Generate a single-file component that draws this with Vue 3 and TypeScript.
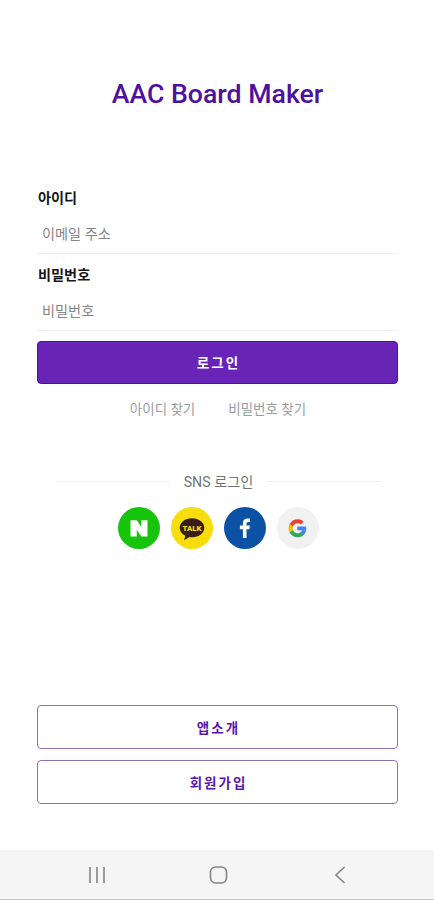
<script setup lang="ts">
import { ref } from 'vue'

const email = ref('')
const password = ref('')
</script>

<template>
  <div class="screen">
    <main class="content">
      <h1 class="title">AAC Board Maker</h1>

      <form class="form" @submit.prevent>
        <label class="label" for="email">아이디</label>
        <input id="email" v-model="email" class="input" type="text" placeholder="이메일 주소" />
        <label class="label second" for="password">비밀번호</label>
        <input id="password" v-model="password" class="input" type="password" placeholder="비밀번호" />
        <button class="btn primary" type="submit">로그인</button>
      </form>

      <nav class="links">
        <a class="link">아이디 찾기</a>
        <a class="link">비밀번호 찾기</a>
      </nav>

      <div class="divider"><span class="sns">SNS 로그인</span></div>

      <div class="socials">
        <button class="social" type="button" aria-label="Naver">
          <svg viewBox="0 0 42 42">
            <circle cx="21" cy="21" r="21" fill="#15c40b" />
            <path d="M12.500 13.300h6.300l4.500 6.800v-6.800h6.200v16.200h-6.200l-4.500-6.700v6.700h-6.300z" fill="#fff" />
          </svg>
        </button>
        <button class="social" type="button" aria-label="Kakao">
          <svg viewBox="0 0 42 42">
            <circle cx="21" cy="21" r="21" fill="#f8dd0c" />
            <path d="M21 11.200c-7 0-12.300 4.200-12.300 9.600 0 3.500 2.200 6.400 5.600 8l-1.200 4.500 5.300-3.200c.8.200 1.700.2 2.600.2 7 0 12.300-4.200 12.300-9.500S28 11.200 21 11.200z" fill="#381e1b" />
            <text class="talk" x="21" y="24" text-anchor="middle" textLength="19" lengthAdjust="spacingAndGlyphs">TALK</text>
          </svg>
        </button>
        <button class="social" type="button" aria-label="Facebook">
          <svg viewBox="0 0 42 42">
            <circle cx="21" cy="21" r="21" fill="#0b52a4" />
            <path d="M18.900 31v-8.800h-3V18.600h3v-2.400c0-3.200 1.800-4.700 4.700-4.700h2.400v3.400h-1.700c-1.400 0-1.800.7-1.800 1.900v1.800h3.400l-.5 3.600h-2.900V31z" fill="#fff" />
          </svg>
        </button>
        <button class="social" type="button" aria-label="Google">
          <svg viewBox="0 0 42 42">
            <circle cx="21" cy="21" r="21" fill="#f1f1f1" />
            <g transform="translate(11.800 12.500) scale(.365)">
              <path fill="#EA4335" stroke="#EA4335" stroke-width="1.500" d="M24 9.500c3.540 0 6.710 1.220 9.210 3.600l6.850-6.850C35.900 2.380 30.470 0 24 0 14.620 0 6.510 5.380 2.560 13.220l7.980 6.190C12.430 13.720 17.740 9.500 24 9.500z" />
              <path fill="#34A853" stroke="#34A853" stroke-width="1.500" d="M24 48c6.480 0 11.930-2.130 15.890-5.810l-7.730-6c-2.150 1.450-4.920 2.300-8.160 2.300-6.260 0-11.570-4.220-13.470-9.910l-7.980 6.190C6.510 42.620 14.620 48 24 48z" />
              <path fill="#FBBC05" stroke="#FBBC05" stroke-width="1.500" d="M10.530 28.590c-.48-1.450-.76-2.990-.76-4.590s.27-3.140.76-4.590l-7.980-6.190C.92 16.460 0 20.120 0 24c0 3.880.92 7.540 2.560 10.780l7.970-6.190z" />
              <path fill="#4285F4" stroke="#4285F4" stroke-width="1.500" d="M46.980 24.550c0-1.570-.15-3.090-.38-4.550H24v9.020h12.940c-.58 2.960-2.260 5.480-4.780 7.180l7.730 6c4.510-4.180 7.090-10.360 7.090-17.650z" />
            </g>
          </svg>
        </button>
      </div>

      <div class="actions">
        <button class="btn outline" type="button">앱소개</button>
        <button class="btn outline" type="button">회원가입</button>
      </div>
    </main>

    <footer class="system-bar">
      <svg class="sys" viewBox="0 0 20 20"><path d="M3 2v16M10 2v16M17 2v16" /></svg>
      <svg class="sys" viewBox="0 0 20 20"><rect x="1.500" y="2" width="16" height="16" rx="5" /></svg>
      <svg class="sys" viewBox="0 0 20 20"><path d="M14.500 2L6 10l8.500 8" /></svg>
    </footer>
  </div>
</template>

<style>
body {
  background: #fff;
}
</style>

<style scoped>
.screen {
  box-sizing: border-box;
  display: flex;
  flex-direction: column;
  width: 100%;
  height: 900px;
  background: #fff;
  font-family: Roboto, "Noto Sans CJK KR", sans-serif;
}
.content {
  display: flex;
  flex: 1;
  flex-direction: column;
  padding: 78px 36px 46px 37px;
}
.title {
  margin: 0;
  color: #50109f;
  font-size: 26.700px;
  font-weight: 500;
  line-height: 32px;
  text-align: center;
}
.form {
  display: flex;
  flex-direction: column;
  margin-top: 78px;
}
.label {
  height: 20px;
  padding-left: 1px;
  color: #151515;
  font-size: 14.200px;
  font-weight: 700;
  line-height: 20px;
}
.second {
  margin-top: 11px;
}
.input {
  box-sizing: border-box;
  width: 100%;
  height: 46px;
  margin: 0;
  padding: 7px 5px 0;
  border: 0;
  border-bottom: 1px solid #f0f0f0;
  outline: 0;
  background: transparent;
  font: 14.200px/20px Roboto, "Noto Sans CJK KR", sans-serif;
}
.input::placeholder {
  color: #858585;
  opacity: 1;
}
.btn {
  box-sizing: border-box;
  width: 100%;
  padding: 0 0 1px 2px;
  border-radius: 4px;
  font-family: Roboto, "Noto Sans CJK KR", sans-serif;
  font-size: 13.500px;
  font-weight: 700;
  letter-spacing: 2px;
}
.primary {
  height: 43px;
  margin-top: 10px;
  border: 1px solid #4c0f9f;
  background: #6724b7;
  color: #fff;
}
.links {
  display: flex;
  justify-content: center;
  gap: 33px;
  margin: 15px 0 0 1px;
}
.link {
  color: #999da1;
  font-size: 13.500px;
  line-height: 20px;
}
.divider {
  display: flex;
  align-items: center;
  gap: 14px;
  height: 20px;
  margin: 52px 17px 0 19px;
}
.divider::before,
.divider::after {
  flex: 1;
  height: 1px;
  background: #f0f0f0;
  content: "";
}
.sns {
  padding-top: 2px;
  color: #747474;
  font-size: 14.200px;
  line-height: 20px;
}
.socials {
  display: flex;
  justify-content: center;
  gap: 11px;
  margin: 16px 0 0 1px;
}
.social {
  width: 42px;
  height: 42px;
  padding: 0;
  border: 0;
  background: none;
}
.social svg {
  display: block;
}
.talk {
  fill: #f8dd0c;
  font-family: Roboto, sans-serif;
  font-size: 8px;
  font-weight: 900;
}
.actions {
  display: flex;
  flex-direction: column;
  gap: 11px;
  margin-top: auto;
}
.outline {
  height: 44px;
  border: 1px solid #8f70b8;
  background: #fff;
  color: #5717ad;
}
.system-bar {
  box-sizing: border-box;
  display: flex;
  align-items: center;
  justify-content: space-between;
  height: 50px;
  padding: 0 84px 0 87px;
  border-bottom: 1px solid #c8c8c8;
  background: #f5f5f5;
}
.sys {
  width: 20px;
  height: 20px;
  fill: none;
  stroke: #858585;
  stroke-width: 1.600;
}
</style>
